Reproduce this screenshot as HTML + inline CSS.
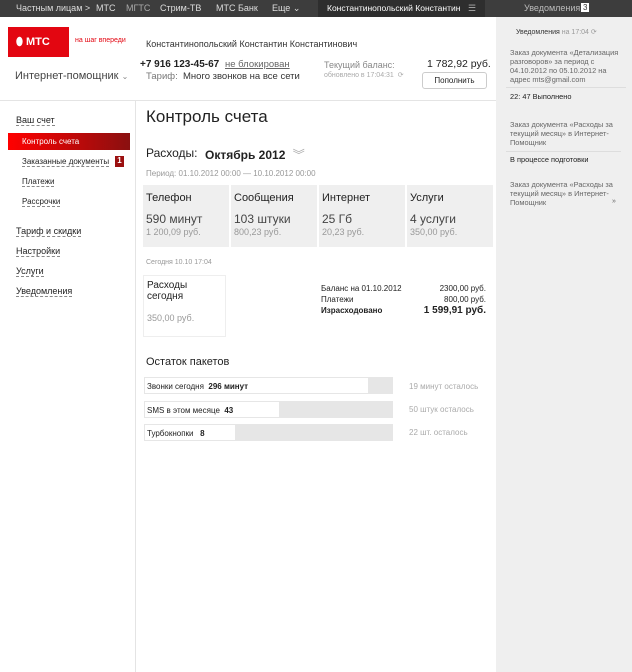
<!DOCTYPE html>
<html><head><meta charset="utf-8"><style>
*{margin:0;padding:0;box-sizing:border-box}
body{width:632px;height:672px;position:relative;background:#fff;font-family:"Liberation Sans",sans-serif;color:#222;overflow:hidden}
.a{position:absolute;white-space:nowrap}
.top{left:0;top:0;width:632px;height:17px;background:#3d3d3d}
.top span{position:absolute;top:3px;font-size:9px;color:#ddd}
.u{border-bottom:1px dashed #888}
.card{position:absolute;top:185px;width:86px;height:62px;background:#efefef}
.card .t{position:absolute;left:3px;top:7px;font-size:11px}
.card .v{position:absolute;left:3px;top:27px;font-size:12px;color:#444}
.card .s{position:absolute;left:3px;top:42px;font-size:9px;color:#999}
.bar{position:absolute;left:144px;width:249px;height:17px;background:#e6e6e6}
.bar div{position:absolute;left:1px;top:1px;height:15px;background:#fff;font-size:8px;padding:4px 0 0 2px}
.n{font-size:8px;color:#555}
.nt{font-size:7.4px;color:#666;line-height:9px;white-space:normal;width:118px}
</style></head><body>
<div class="a top">
<span style="left:16px">Частным лицам &gt;</span><span style="left:96px">МТС</span><span style="left:126px;color:#aaa">МГТС</span><span style="left:160px">Стрим-ТВ</span><span style="left:216px">МТС Банк</span><span style="left:272px">Еще ⌄</span>
<div style="position:absolute;left:318px;top:0;width:167px;height:17px;background:#2e2e2e"></div>
<span style="left:327px;color:#fff;font-size:8.5px">Константинопольский Константин</span><span style="left:468px;color:#aaa">☰</span>
<span style="left:524px;color:#bbb">Уведомления</span><span style="left:581px;top:3px;background:#fff;color:#333;padding:0 2px;font-size:8px">3</span>
</div>
<div class="a" style="left:496px;top:17px;width:136px;height:655px;background:#efefef"></div>
<div class="a" style="left:0;top:100px;width:496px;height:1px;background:#e4e4e4"></div>
<div class="a" style="left:135px;top:100px;width:1px;height:572px;background:#e4e4e4"></div>
<div class="a" style="left:8px;top:27px;width:61px;height:30px;background:#e30611;color:#fff;font-weight:bold;font-size:11px;padding:9px 0 0 8px">⬮ МТС</div>
<div class="a" style="left:75px;top:37px;font-size:7px;color:#e30611">на шаг впереди</div>
<div class="a" style="left:15px;top:70px;font-size:11px;color:#444">Интернет-помощник <span style="font-size:8px;color:#888">⌄</span></div>
<div class="a" style="left:146px;top:39px;font-size:9px;color:#333">Константинопольский Константин Константинович</div>
<div class="a" style="left:140px;top:59px;font-size:10px;font-weight:bold">+7 916 123-45-67</div>
<div class="a" style="left:225px;top:59px;font-size:9.5px;color:#666;text-decoration:underline">не блокирован</div>
<div class="a" style="left:146px;top:71px;font-size:9.5px;color:#333"><span style="color:#777">Тариф:</span>&nbsp; Много звонков на все сети</div>
<div class="a" style="left:324px;top:60px;font-size:9px;color:#888">Текущий баланс:</div>
<div class="a" style="left:324px;top:71px;font-size:7px;color:#aaa">обновлено в 17:04:31 &nbsp;⟳</div>
<div class="a" style="left:427px;top:58px;font-size:10.5px">1 782,92 руб.</div>
<div class="a" style="left:422px;top:72px;width:65px;height:17px;border:1px solid #ccc;border-radius:3px;font-size:8px;text-align:center;padding-top:3px">Пополнить</div>
<div class="a" style="left:516px;top:28px;font-size:7px;color:#333">Уведомления <span style="color:#999">на 17:04 ⟳</span></div>
<div class="a nt" style="left:510px;top:48px">Заказ документа «Детализация разговоров» за период с 04.10.2012 по 05.10.2012 на адрес mts@gmail.com</div>
<div class="a" style="left:506px;top:87px;width:120px;height:1px;background:#ddd"></div>
<div class="a" style="left:510px;top:92px;font-size:7.4px;color:#222">22: 47 Выполнено</div>
<div class="a nt" style="left:510px;top:120px">Заказ документа «Расходы за текущий месяц» в Интернет-Помощник</div>
<div class="a" style="left:506px;top:151px;width:115px;height:1px;background:#ddd"></div>
<div class="a" style="left:510px;top:155px;font-size:7.4px;color:#222">В процессе подготовки</div>
<div class="a nt" style="left:510px;top:180px">Заказ документа «Расходы за текущий месяц» в Интернет-Помощник</div>
<div class="a" style="left:612px;top:198px;font-size:7px;color:#666">»</div>
<div class="a" style="left:16px;top:115px;font-size:9px"><span class="u">Ваш счет</span></div>
<div class="a" style="left:8px;top:133px;width:122px;height:17px;background:linear-gradient(90deg,#f00,#8a1010);color:#fff;font-size:8px;padding:4px 0 0 14px">Контроль счета</div>
<div class="a" style="left:22px;top:157px;font-size:8px"><span class="u">Заказанные документы</span></div>
<div class="a" style="left:115px;top:156px;width:9px;height:11px;background:#9b1010;color:#fff;font-size:8px;text-align:center;font-weight:bold">1</div>
<div class="a" style="left:22px;top:177px;font-size:8px"><span class="u">Платежи</span></div>
<div class="a" style="left:22px;top:197px;font-size:8px"><span class="u">Рассрочки</span></div>
<div class="a" style="left:16px;top:226px;font-size:9px"><span class="u">Тариф и скидки</span></div>
<div class="a" style="left:16px;top:246px;font-size:9px"><span class="u">Настройки</span></div>
<div class="a" style="left:16px;top:266px;font-size:9px"><span class="u">Услуги</span></div>
<div class="a" style="left:16px;top:286px;font-size:9px"><span class="u">Уведомления</span></div>
<div class="a" style="left:146px;top:107px;font-size:17px">Контроль счета</div>
<div class="a" style="left:146px;top:146px;font-size:12px">Расходы:</div>
<div class="a" style="left:205px;top:146px;font-size:12px;font-weight:bold">Октябрь 2012 <span style="color:#aaa;font-weight:normal;margin-left:4px">︾</span></div>
<div class="a" style="left:146px;top:169px;font-size:8px;color:#999">Период: 01.10.2012 00:00 — 10.10.2012 00:00</div>
<div class="card" style="left:143px"><div class="t">Телефон</div><div class="v">590 минут</div><div class="s">1 200,09 руб.</div></div>
<div class="card" style="left:231px"><div class="t">Сообщения</div><div class="v">103 штуки</div><div class="s">800,23 руб.</div></div>
<div class="card" style="left:319px"><div class="t">Интернет</div><div class="v">25 Гб</div><div class="s">20,23 руб.</div></div>
<div class="card" style="left:407px"><div class="t">Услуги</div><div class="v">4 услуги</div><div class="s">350,00 руб.</div></div>
<div class="a" style="left:146px;top:259px;font-size:7px;color:#999">Сегодня 10.10 17:04</div>
<div class="a" style="left:143px;top:275px;width:83px;height:62px;border:1px solid #eee;font-size:10px;padding:4px 3px;white-space:normal">Расходы сегодня<div style="font-size:9px;color:#999;margin-top:11px">350,00 руб.</div></div>
<div class="a n" style="left:321px;top:283px;color:#222;line-height:11px">Баланс на 01.10.2012<br>Платежи<br><b>Израсходовано</b></div>
<div class="a n" style="left:400px;top:283px;width:86px;text-align:right;color:#222;line-height:11px">2300,00 руб.<br>800,00 руб.<br><b style="font-size:10px">1 599,91 руб.</b></div>
<div class="a" style="left:146px;top:356px;font-size:11px">Остаток пакетов</div>
<div class="bar" style="top:377px"><div style="width:223px">Звонки сегодня &nbsp;<b>296 минут</b></div></div>
<div class="bar" style="top:401px"><div style="width:134px">SMS в этом месяце &nbsp;<b>43</b></div></div>
<div class="bar" style="top:424px"><div style="width:90px">Турбокнопки &nbsp; <b>8</b></div></div>
<div class="a" style="left:409px;top:382px;font-size:8px;color:#aaa">19 минут осталось</div>
<div class="a" style="left:409px;top:405px;font-size:8px;color:#aaa">50 штук осталось</div>
<div class="a" style="left:409px;top:428px;font-size:8px;color:#aaa">22 шт. осталось</div>
</body></html>
